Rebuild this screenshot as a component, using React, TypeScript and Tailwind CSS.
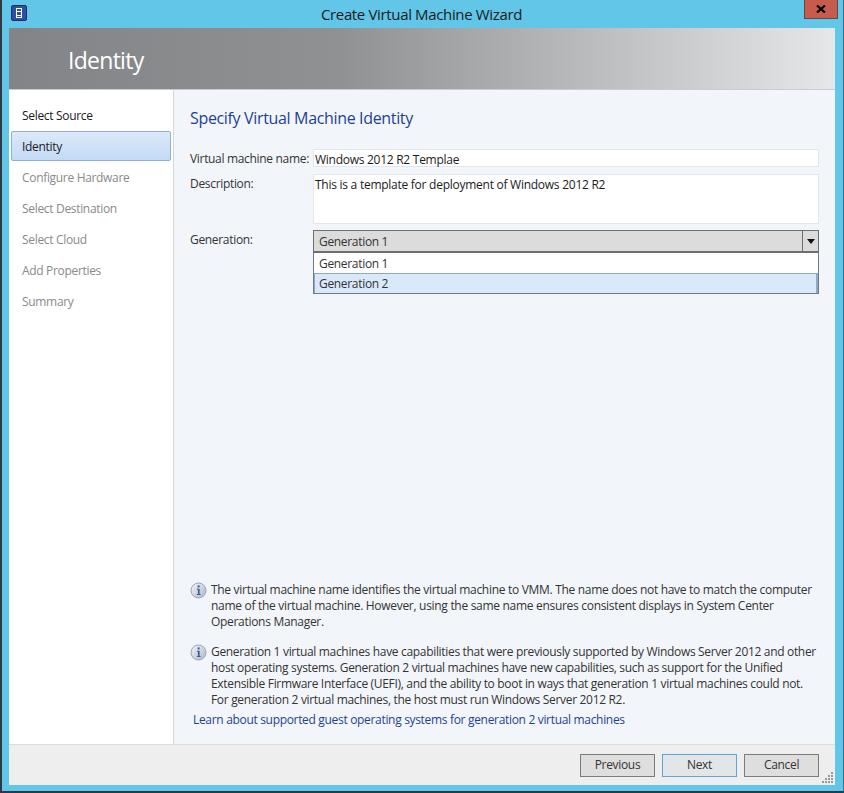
function InfoIcon() {
  return (
    <svg width="17" height="17" viewBox="0 0 17 17" className="shrink-0">
      <defs>
        <linearGradient id="ig" x1="0" y1="0" x2="1" y2="1">
          <stop offset="0" stopColor="#f4f6f9" />
          <stop offset="1" stopColor="#aeb6c4" />
        </linearGradient>
      </defs>
      <circle cx="8.5" cy="8.5" r="7.5" fill="url(#ig)" stroke="#9aa3b3" strokeWidth="1" />
      <rect x="7.6" y="3.4" width="2" height="2" fill="#2f5fa8" />
      <path d="M6.9 6.8h2.7v5.2h1v1H6.9v-1h1v-4.2h-1z" fill="#2f5fa8" />
    </svg>
  );
}

function NavItem({ label, state }: { label: string; state?: "done" | "active" }) {
  if (state === "active") {
    return (
      <div className="h-[30px] mx-[2px] mb-[1px] pl-[10px] pt-[1px] flex items-center rounded-[2px] border border-[#8fb0d6] bg-gradient-to-b from-[#dce9f9] to-[#c3dbf6] text-[#1b1b1b]">
        {label}
      </div>
    );
  }
  return (
    <div className={"h-[31px] mx-[2px] pl-[11px] flex items-center " + (state === "done" ? "text-[#1b1b1b]" : "text-[#8a8a8a]")}>
      {label}
    </div>
  );
}

function Btn({ label, focus }: { label: string; focus?: boolean }) {
  return (
    <div className={"w-[75px] h-[23px] flex items-center justify-center border text-[#333] " + (focus ? "border-[#5aa7dc] bg-[#e3e6e8]" : "border-[#7b7b7b] bg-[#dedede]")}>
      {label}
    </div>
  );
}

export default function App() {
  return (
    <div className="w-[844px] h-[793px] overflow-hidden bg-[#62c6e9] border-l-2 border-r border-b-2 border-l-[#2b3a44] border-r-[#3f6f85] border-b-[#2b3a44] flex flex-col text-[12px] leading-[16px] font-['Open_Sans',sans-serif] tracking-[-0.32px]">
      <div className="h-[28px] shrink-0 flex items-start relative">
        <div className="absolute left-[9px] top-[5px] w-[16px] h-[16px] rounded-[2px] bg-[#2f4f9f] border border-[#1d2f66] flex items-center justify-center">
          <div className="w-[6px] h-[10px] border border-white flex flex-col justify-around">
            <div className="h-px bg-white" />
            <div className="h-px bg-white" />
          </div>
        </div>
        <div className="w-full text-center text-[15px] leading-[28px] text-[#1a1a1a] pr-[2px] tracking-[-0.35px]">Create Virtual Machine Wizard</div>
        <div className="absolute right-[5px] top-0 w-[34px] h-[19px] bg-[#c75b4e] border border-[#5a4a4a] border-t-0 flex items-center justify-center">
          <svg width="10" height="8" viewBox="0 0 10 8"><path d="M1 0.5 9 7.5M9 0.5 1 7.5" stroke="#000" strokeWidth="2.2" /></svg>
        </div>
      </div>
      <div className="flex-1 ml-[7px] mb-[6px] flex flex-col min-h-0 w-[826px]">
        <div className="h-[62px] shrink-0 bg-gradient-to-r from-[#828487] via-[#8f9193] via-40% to-[#e6e7e9] border-b border-[#c9cbcd] flex items-center pl-[59px] pt-[2px]">
          <span className="text-[23px] text-white font-normal tracking-[-0.72px]">Identity</span>
        </div>
        <div className="flex-1 flex min-h-0">
          <div className="w-[165px] shrink-0 bg-white border-r border-[#d4d6d8] pt-[10px]">
            <NavItem label="Select Source" state="done" />
            <NavItem label="Identity" state="active" />
            <NavItem label="Configure Hardware" />
            <NavItem label="Select Destination" />
            <NavItem label="Select Cloud" />
            <NavItem label="Add Properties" />
            <NavItem label="Summary" />
          </div>
          <div className="flex-1 bg-[#f2f6fa] pl-[16px] pr-[16px] flex flex-col text-[#333]">
            <h1 className="mt-[17px] text-[16px] leading-[22px] text-[#1f3f96] font-normal tracking-[-0.34px]">Specify Virtual Machine Identity</h1>
            <div className="mt-[20px] grid grid-cols-[123px_506px] gap-y-[6px]">
              <div className="leading-[18px] pt-[1px]">Virtual machine name:</div>
              <div className="h-[18px] bg-white border border-[#e3e6ea] pl-[1px] pt-[1px] leading-[17px] text-[#1b1b1b] tracking-[-0.27px]">Windows 2012 R2 Templae</div>
              <div className="leading-[18px] pt-[1px]">Description:</div>
              <div className="h-[50px] bg-white border border-[#e3e6ea] pl-[1px] pt-[1px] leading-[17px] text-[#1b1b1b] tracking-[-0.26px]">This is a template for deployment of Windows 2012 R2</div>
              <div className="leading-[18px] pt-[1px]">Generation:</div>
              <div className="flex flex-col">
                <div className="h-[23px] flex border border-[#6e6e6e] border-b-2 bg-[#dcdcdc]">
                  <div className="flex-1 pl-[5px] leading-[22px]">Generation 1</div>
                  <div className="w-[16px] border-l border-[#6e6e6e] flex items-center justify-center">
                    <svg width="8" height="5" viewBox="0 0 8 5"><path d="M0 0h8L4 5z" fill="#111" /></svg>
                  </div>
                </div>
                <div className="border border-t-0 border-[#6e7a86] bg-white">
                  <div className="h-[20px] pl-[5px] leading-[21px]">Generation 1</div>
                  <div className="h-[20px] pl-[4px] leading-[19px] bg-[#d9e9fb] border border-[#8ea9c6] border-b-0 border-r-2">Generation 2</div>
                </div>
              </div>
            </div>
            <div className="mt-auto flex gap-[4px]">
              <InfoIcon />
              <p className="whitespace-nowrap tracking-[-0.3px]">
                The virtual machine name identifies the virtual machine to VMM. The name does not have to match the computer<br />
                name of the virtual machine. However, using the same name ensures consistent displays in System Center<br />
                Operations Manager.
              </p>
            </div>
            <div className="mt-[14px] flex gap-[4px]">
              <InfoIcon />
              <p className="whitespace-nowrap">
                Generation 1 virtual machines have capabilities that were previously supported by Windows Server 2012 and other<br />
                host operating systems. Generation 2 virtual machines have new capabilities, such as support for the Unified<br />
                Extensible Firmware Interface (UEFI), and the ability to boot in ways that generation 1 virtual machines could not.<br />
                For generation 2 virtual machines, the host must run Windows Server 2012 R2.
              </p>
            </div>
            <div className="mt-[4px] mb-[16px] pl-[3px] text-[#1f3f96] whitespace-nowrap">Learn about supported guest operating systems for generation 2 virtual machines</div>
          </div>
        </div>
        <div className="h-[41px] shrink-0 bg-[#eeeeee] border-t border-[#dcdcdc] flex items-center justify-end gap-[7px] pr-[16px] relative">
          <Btn label="Previous" />
          <Btn label="Next" focus />
          <Btn label="Cancel" />
          <svg width="12" height="12" viewBox="0 0 12 12" className="absolute right-[1px] bottom-[1px]">
            <g fill="#9a9a9a">
              <rect x="9" y="0" width="2" height="2" />
              <rect x="6" y="3" width="2" height="2" /><rect x="9" y="3" width="2" height="2" />
              <rect x="3" y="6" width="2" height="2" /><rect x="6" y="6" width="2" height="2" /><rect x="9" y="6" width="2" height="2" />
              <rect x="0" y="9" width="2" height="2" /><rect x="3" y="9" width="2" height="2" /><rect x="6" y="9" width="2" height="2" /><rect x="9" y="9" width="2" height="2" />
            </g>
          </svg>
        </div>
      </div>
    </div>
  );
}
